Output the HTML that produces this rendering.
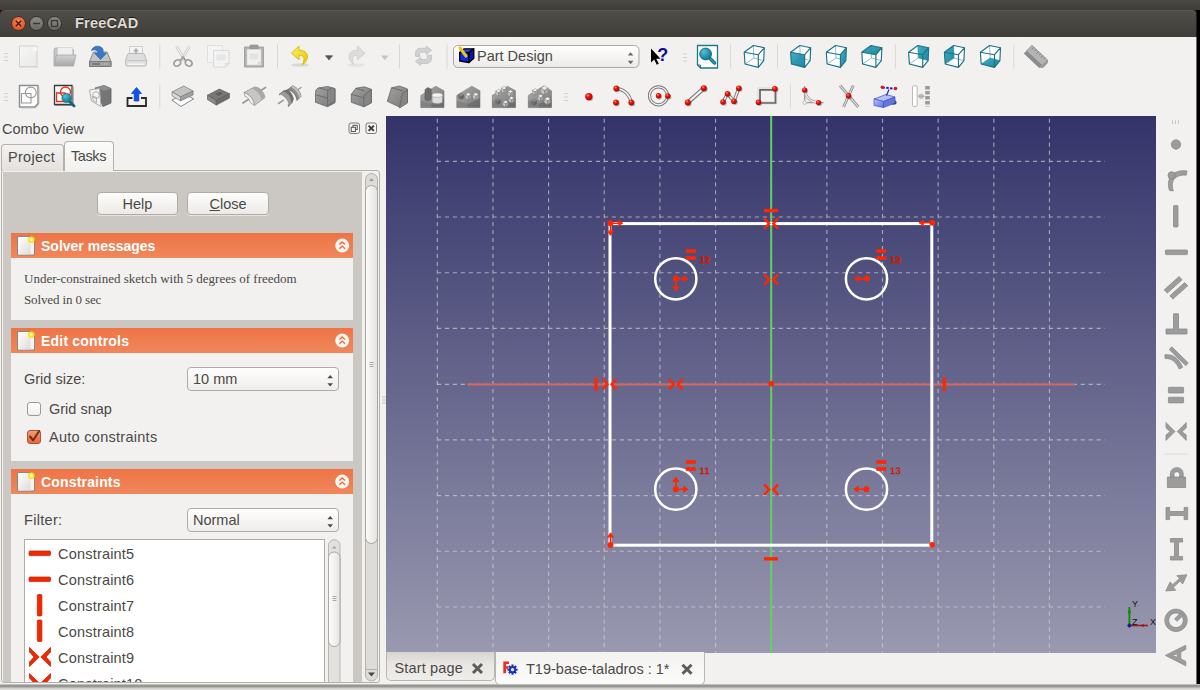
<!DOCTYPE html>
<html>
<head>
<meta charset="utf-8">
<title>FreeCAD</title>
<style>
html,body{margin:0;padding:0;}
body{width:1200px;height:690px;overflow:hidden;position:relative;background:#d9d7d3;font-family:"Liberation Sans",sans-serif;color:#4a4945;font-size:14px;}
.abs{position:absolute;}
#desk-right{left:1197px;top:9px;width:3px;height:676.500px;background:#000;}
#win{left:0;top:0;width:1197px;height:685px;background:#f2f1f0;overflow:hidden;}
#below{left:0;top:684px;width:1200px;height:6px;background:linear-gradient(#d8d6d3 0,#9a9894 22%,#8f8d89 36%,#b9b7b3 60%,#dddbd7 85%,#e6e4e1 100%);}
#topstrip{left:0;top:0;width:1200px;height:10px;background:linear-gradient(#4b4a45,#3d3c38);z-index:3;}
#titlebar{left:0;top:10px;width:1197px;height:27px;border-radius:5px 5px 0 0;background:linear-gradient(#4f4e48,#3e3d38);border-top:1px solid #5a5852;box-sizing:border-box;}
#title{left:75px;top:14px;font-weight:bold;font-size:14.5px;color:#dfdbd2;line-height:18px;letter-spacing:0.2px;text-shadow:0 -1px 0 #1c1b19;}
.wbtn{width:15px;height:15px;border-radius:50%;top:16px;box-sizing:border-box;}
/* 3D view */
#view{left:386px;top:116px;width:770px;height:537px;background:linear-gradient(#33336a,#9999b0);overflow:hidden;}
/* left panel */
.lbl{white-space:nowrap;line-height:18px;}
#tabframe{left:1px;top:170px;width:379px;height:512.500px;border:1px solid #b5b1ab;border-radius:3px;box-sizing:border-box;background:#f2f1f0;}
#scrollarea{left:3px;top:172px;width:359px;height:510px;background:#cbc8c4;overflow:hidden;}
.tab{box-sizing:border-box;border:1px solid #b5b1ab;border-bottom:none;border-radius:4px 4px 0 0;text-align:center;}
.btn{box-sizing:border-box;border:1px solid #b0aca5;border-radius:4px;background:linear-gradient(#fdfdfc,#eceae7);text-align:center;box-shadow:0 1px 0 rgba(255,255,255,.5);}
.hdr{left:8px;width:342px;height:25px;background:linear-gradient(#ee7445,#f0875c);color:#fff;font-weight:bold;}
.hdr .t{position:absolute;left:30px;top:4px;font-size:14px;line-height:18px;white-space:nowrap;}
.box{left:8px;width:342px;background:#f2f1f0;}
.combo{box-sizing:border-box;border:1px solid #b0aca5;border-radius:4px;background:linear-gradient(#fefefe,#efedeb);}
.chk{box-sizing:border-box;width:14px;height:14px;border:1px solid #9c9892;border-radius:3px;background:linear-gradient(#fff,#f0efed);}
</style>
</head>
<body>
<div id="win" class="abs">
  <div class="abs" style="left:0;top:9px;width:1197px;height:8px;background:#3a0806;"></div>
  <div id="titlebar" class="abs"></div>
  <div class="abs wbtn" style="left:11px;background:radial-gradient(circle at 50% 35%,#f08763,#df5a2c 70%);border:1px solid #5a2a18;"></div>
  <div class="abs wbtn" style="left:29px;background:linear-gradient(#8c8a82,#6a6861);border:1px solid #33322e;"></div>
  <div class="abs wbtn" style="left:47px;background:linear-gradient(#8c8a82,#6a6861);border:1px solid #33322e;"></div>
  <svg class="abs" style="left:10px;top:15px" width="54" height="17" viewBox="10 15 54 17"><path d="M15.800 20.800l5.400 5.400m0-5.400l-5.400 5.400" stroke="#4a1a0c" stroke-width="1.400" fill="none"/><path d="M33 23.500h7" stroke="#3a3934" stroke-width="1.400"/><rect x="51.500" y="20.500" width="6" height="6" fill="none" stroke="#3a3934" stroke-width="1.300"/></svg>
  <div id="title" class="abs">FreeCAD</div>

  <!-- TOOLBARS -->
  <div id="toolbars" class="abs" style="left:0;top:0;width:0;height:0;">
<svg class="abs" style="left:0;top:36px" width="1197" height="80" viewBox="0 36 1197 80">
<defs>
<radialGradient id="rb" cx="0.38" cy="0.32" r="0.7"><stop offset="0" stop-color="#ff9a8a"/><stop offset="0.35" stop-color="#f01808"/><stop offset="1" stop-color="#a80000"/></radialGradient>
<linearGradient id="gpaper" x1="0" y1="0" x2="1" y2="1"><stop offset="0" stop-color="#fbfbfb"/><stop offset="1" stop-color="#e4e3e2"/></linearGradient>
<linearGradient id="ggrey" x1="0" y1="0" x2="0" y2="1"><stop offset="0" stop-color="#c9c9c9"/><stop offset="1" stop-color="#8e8e8e"/></linearGradient>
<linearGradient id="gdark" x1="0" y1="0" x2="1" y2="1"><stop offset="0" stop-color="#9a9a9a"/><stop offset="1" stop-color="#6c6c6c"/></linearGradient>
<linearGradient id="gteal" x1="0" y1="0" x2="1" y2="1"><stop offset="0" stop-color="#35a7c4"/><stop offset="1" stop-color="#0b7f95"/></linearGradient>
<radialGradient id="gteal2" cx="0.35" cy="0.3" r="0.8"><stop offset="0" stop-color="#4fc0d8"/><stop offset="1" stop-color="#0a6f86"/></radialGradient>
<linearGradient id="gblue" x1="0" y1="0" x2="1" y2="1"><stop offset="0" stop-color="#b9c6f4"/><stop offset="1" stop-color="#5a72dc"/></linearGradient>
<linearGradient id="gyel" x1="0" y1="0" x2="1" y2="1"><stop offset="0" stop-color="#fff06a"/><stop offset="1" stop-color="#e4c400"/></linearGradient>
<linearGradient id="gpat" x1="0" y1="0" x2="1" y2="1"><stop offset="0" stop-color="#adadad"/><stop offset="1" stop-color="#767676"/></linearGradient>
<linearGradient id="gsolid" x1="0" y1="0" x2="1" y2="1"><stop offset="0" stop-color="#a2a2a2"/><stop offset="1" stop-color="#787878"/></linearGradient>
<linearGradient id="gcombo" x1="0" y1="0" x2="0" y2="1"><stop offset="0" stop-color="#ffffff"/><stop offset="1" stop-color="#eceae7"/></linearGradient>
</defs>
<path d="M4.0 53.5h4M4.0 57.0h4M4.0 60.5h4" stroke="#d5d2ce" stroke-width="1.2"/>
<g opacity="0.55"><path d="M19.5 46h17.5v20.5h-17.500z" fill="url(#gpaper)" stroke="#b8b8b8"/><circle cx="35" cy="49" r="2.200" fill="#fff"/><path d="M19 67h19" stroke="#bdbdbd"/></g>
<g opacity="0.75"><path d="M54 49.500l1-1.500h5l1 1.500h12.500v16h-19.500z" fill="#b4b4b4" stroke="#9a9a9a" stroke-width="0.800"/><path d="M57.500 47.500h15v9h-15z" fill="#f0f0f0" stroke="#c0c0c0" stroke-width="0.600"/><path d="M56.500 55h19.500l-2.500 11h-19.500z" fill="url(#ggrey)" stroke="#8f8f8f" stroke-width="0.800"/></g>
<g><path d="M93.500 52h13.500l4 9.500v5h-21.500v-5z" fill="#c4c4c4" stroke="#7d7d7d" stroke-width="0.9"/><path d="M89.500 61.500h21.500v5h-21.500z" fill="#9d9d9d" stroke="#777" stroke-width="0.9"/><path d="M92 64h8" stroke="#666" stroke-width="1.2"/><path d="M102 63v2M104.500 63v2M107 63v2" stroke="#bbb" stroke-width="1"/><path d="M91.500 50.500c1.500-5 9-6 11.500-1.200l0 4h3.300l-5.800 6.200l-5.800-6.200h3.500c0-3-3.500-4.500-6.700-2.800z" fill="#3a78c8" stroke="#2a5ea8" stroke-width="0.7"/></g>
<g><path d="M129.500 46.500h13v8.500h-13z" fill="#f4f4f4" stroke="#c4c4c4" stroke-width="0.800"/><path d="M136 48l3.200 3.200h-2v2.300h-2.400v-2.300h-2z" fill="#b0b0b0"/><path d="M127.500 55c0-1 1-1.500 2-1.500h13c1 0 2 .5 2 1.500l2 5.500v4c0 1-.7 1.500-1.500 1.500h-18c-.8 0-1.500-.5-1.500-1.500v-4z" fill="#dedede" stroke="#b4b4b4" stroke-width="0.900"/><path d="M126.500 60.500h19.500" stroke="#c4c4c4"/><path d="M128 64.200h16.500" stroke="#f6f6f6" stroke-width="1.400"/></g>
<path d="M159.8 44.5v24" stroke="#dad7d3" stroke-width="1"/>
<g opacity="0.85" fill="none"><path d="M176.500 46.500l8.500 14M189.500 46.500l-8.500 14" stroke="#c5c5c5" stroke-width="2.600"/><path d="M176.500 46.500l8.500 14M189.500 46.500l-8.500 14" stroke="#f3f3f3" stroke-width="1.100"/><ellipse cx="177.300" cy="63" rx="3.600" ry="2.900" stroke="#8f8f8f" stroke-width="1.700" transform="rotate(-30 177.300 63)"/><ellipse cx="188.700" cy="63" rx="3.600" ry="2.900" stroke="#8f8f8f" stroke-width="1.700" transform="rotate(30 188.700 63)"/><path d="M180.500 60.500l2.500-3.500l2.500 3.500" stroke="#8f8f8f" stroke-width="1.600"/></g>
<g opacity="0.5"><path d="M207.500 45.500h15v17h-15z" fill="#f8f8f8" stroke="#c9c9c9" stroke-width="0.9"/><path d="M213.500 50.500h15.500v13l-3.500 3.500h-12z" fill="#f6f6f6" stroke="#bdbdbd" stroke-width="0.9"/><path d="M216.500 54.500h9v6h-9z" fill="#dcdcdc"/><path d="M225.500 67v-3.500h3.500z" fill="#e2e2e2" stroke="#bdbdbd" stroke-width="0.7"/></g>
<g opacity="0.85"><path d="M244.500 47h19v20h-19z" fill="#a9a9a9" stroke="#8f8f8f" stroke-width="0.9"/><path d="M247 49.500h14v15.500h-14z" fill="#f1f1f1" stroke="#d0d0d0" stroke-width="0.6"/><path d="M250 45h8v3.500h-8z" fill="#8d8d8d" stroke="#7c7c7c" stroke-width="0.6"/><path d="M249.500 53.500h9v6h-9z" fill="#e0e0e0"/><path d="M258 65v-3h3z" fill="#c9c9c9"/></g>
<path d="M277.5 44.5v24" stroke="#dad7d3" stroke-width="1"/>
<ellipse cx="300" cy="65" rx="9" ry="1.800" fill="#000" opacity="0.10"/>
<path d="M299 46l-7.500 7.200l7.500 6.600v-4.200c4.500-.8 6.800 2 3.300 9.400c7.500-5.500 7.200-14.800-3.300-14.700z" fill="url(#gyel)" stroke="#d8b800" stroke-width="0.9" stroke-linejoin="round"/>
<path d="M325.300 55.800h7.400l-3.700 4.800z" fill="#5a5a5a"/><path d="M325.300 55.900h7.400" stroke="#444" stroke-width="0.800"/>
<ellipse cx="356" cy="65" rx="9" ry="1.800" fill="#000" opacity="0.05"/>
<path d="M357.500 46l7.500 7.200l-7.500 6.600v-4.200c-4.500-.8-6.800 2-3.300 9.400c-7.500-5.500-7.200-14.800 3.300-14.700z" fill="#dcdcdc" stroke="#cfcfcf" stroke-width="0.9" stroke-linejoin="round"/>
<path d="M381 55.500h7.500l-3.750 4.800z" fill="#c4c4c4"/>
<path d="M399.5 44.5v24" stroke="#dad7d3" stroke-width="1"/>
<g transform="translate(423.500 55.600) scale(0.860 0.820) translate(-423.500 -55.500)" fill="#d2d2d2" stroke="#bdbdbd" stroke-width="0.900" stroke-linejoin="round"><path d="M414.300 56.500v-4.500c0-3.500 2.500-5.500 6-5.500h6.500v-2.500l6 5l-6 5v-2.700h-5.500c-1.500 0-2.300.8-2.300 2.200v3z"/><path d="M432.700 55v4.500c0 3.500-2.500 5.500-6 5.500h-6.500v2.500l-6-5l6-5v2.700h5.500c1.500 0 2.300-.8 2.300-2.200v-3z"/></g>
<path d="M447.0 44.5v24" stroke="#dad7d3" stroke-width="1"/>
<rect x="453.500" y="45.500" width="185.500" height="22" rx="4.500" fill="url(#gcombo)" stroke="#aba7a1"/>
<path d="M627.800 55.600l2.800-3.400l2.800 3.400zM627.800 60.800l2.800 3.400l2.800-3.400z" fill="#6a6863"/>
<g stroke="#000" stroke-width="1.300" stroke-linejoin="round"><path d="M459.700 52.500l9.300 0l0 10l-9.300-1.500z" fill="#0a2ae8"/><path d="M459.700 52.500l4.500-3.700h9.600l-4.800 3.700z" fill="#2a4af0"/><path d="M469 52.500l4.800-3.700v9.500l-4.800 4.200z" fill="#0418b8"/></g>
<path d="M460 48l6 8" stroke="#f0c020" stroke-width="3.200" stroke-linecap="round"/>
<path d="M651 48.500v14l3.200-3l2.600 5.200l2-1l-2.500-5h4.200z" fill="#000"/>
<text x="657.300" y="61.300" font-family="Liberation Sans,sans-serif" font-weight="bold" font-size="18" fill="#10108a">?</text>
<path d="M683.0 54.0h4M683.0 57.5h4M683.0 61.0h4" stroke="#d5d2ce" stroke-width="1.2"/>
<path d="M697.500 45.500h20v22.500h-17l-3-3z" fill="#fff" stroke="#1d7890" stroke-width="1.300" stroke-linejoin="round"/>
<path d="M697.500 65h3v3" fill="none" stroke="#1d7890" stroke-width="1"/>
<path d="M709.500 58l5 5" stroke="#0c6a80" stroke-width="3.400" stroke-linecap="round"/><path d="M709.500 58l5 5" stroke="#2e9ab4" stroke-width="1.600" stroke-linecap="round"/>
<circle cx="705.600" cy="54" r="5.900" fill="url(#gteal2)" stroke="#0c6a80" stroke-width="0.900"/>
<path d="M730.6 44.5v24" stroke="#dad7d3" stroke-width="1"/>
<g stroke-linejoin="round">
<path d="M744.20 52.30L753.40 45.50L764.30 47.70L763.70 60.60L758.30 67.40L745.00 64.00z" fill="#fff" stroke="none"/>
<path d="M753.90 58.00L753.40 45.50M753.90 58.00L763.70 60.60M753.90 58.00L745.00 64.00" fill="none" stroke="#2a8296" stroke-opacity="0.650" stroke-width="0.800"/>
<path d="M744.20 52.30L758.30 54.70L758.30 67.40L745.00 64.00zM744.20 52.30L753.40 45.50L764.30 47.70L758.30 54.70zM758.30 54.70L764.30 47.70L763.70 60.60L758.30 67.40z" fill="none" stroke="#1d7186" stroke-width="1.150"/>
</g>
<path d="M777.5 44.5v24" stroke="#dad7d3" stroke-width="1"/>
<g stroke-linejoin="round">
<path d="M790.60 52.30L799.80 45.50L810.70 47.70L810.10 60.60L804.70 67.40L791.40 64.00z" fill="#fff" stroke="none"/>
<path d="M790.60 52.30L804.70 54.70L804.70 67.40L791.40 64.00z" fill="url(#gteal)" stroke="none" opacity="0.930"/>
<path d="M800.30 58.00L799.80 45.50M800.30 58.00L810.10 60.60M800.30 58.00L791.40 64.00" fill="none" stroke="#2a8296" stroke-opacity="0.650" stroke-width="0.800"/>
<path d="M790.60 52.30L804.70 54.70L804.70 67.40L791.40 64.00zM790.60 52.30L799.80 45.50L810.70 47.70L804.70 54.70zM804.70 54.70L810.70 47.70L810.10 60.60L804.70 67.40z" fill="none" stroke="#1d7186" stroke-width="1.150"/>
</g>
<g stroke-linejoin="round">
<path d="M826.30 52.30L835.50 45.50L846.40 47.70L845.80 60.60L840.40 67.40L827.10 64.00z" fill="#fff" stroke="none"/>
<path d="M840.40 54.70L846.40 47.70L845.80 60.60L840.40 67.40z" fill="url(#gteal)" stroke="none" opacity="0.930"/>
<path d="M836.00 58.00L835.50 45.50M836.00 58.00L845.80 60.60M836.00 58.00L827.10 64.00" fill="none" stroke="#2a8296" stroke-opacity="0.650" stroke-width="0.800"/>
<path d="M826.30 52.30L840.40 54.70L840.40 67.40L827.10 64.00zM826.30 52.30L835.50 45.50L846.40 47.70L840.40 54.70zM840.40 54.70L846.40 47.70L845.80 60.60L840.40 67.40z" fill="none" stroke="#1d7186" stroke-width="1.150"/>
</g>
<g stroke-linejoin="round">
<path d="M861.80 52.30L871.00 45.50L881.90 47.70L881.30 60.60L875.90 67.40L862.60 64.00z" fill="#fff" stroke="none"/>
<path d="M861.80 52.30L871.00 45.50L881.90 47.70L875.90 54.70z" fill="url(#gteal)" stroke="none" opacity="0.930"/>
<path d="M871.50 58.00L871.00 45.50M871.50 58.00L881.30 60.60M871.50 58.00L862.60 64.00" fill="none" stroke="#2a8296" stroke-opacity="0.650" stroke-width="0.800"/>
<path d="M861.80 52.30L875.90 54.70L875.90 67.40L862.60 64.00zM861.80 52.30L871.00 45.50L881.90 47.70L875.90 54.70zM875.90 54.70L881.90 47.70L881.30 60.60L875.90 67.40z" fill="none" stroke="#1d7186" stroke-width="1.150"/>
</g>
<path d="M895.4 44.5v24" stroke="#dad7d3" stroke-width="1"/>
<g stroke-linejoin="round">
<path d="M908.60 52.30L917.80 45.50L928.70 47.70L928.10 60.60L922.70 67.40L909.40 64.00z" fill="#fff" stroke="none"/>
<path d="M917.80 45.50L928.70 47.70L928.10 60.60L918.30 58.00z" fill="url(#gteal)" stroke="none" opacity="0.930"/>
<path d="M918.30 58.00L917.80 45.50M918.30 58.00L928.10 60.60M918.30 58.00L909.40 64.00" fill="none" stroke="#2a8296" stroke-opacity="0.650" stroke-width="0.800"/>
<path d="M908.60 52.30L922.70 54.70L922.70 67.40L909.40 64.00zM908.60 52.30L917.80 45.50L928.70 47.70L922.70 54.70zM922.70 54.70L928.70 47.70L928.10 60.60L922.70 67.40z" fill="none" stroke="#1d7186" stroke-width="1.150"/>
</g>
<g stroke-linejoin="round">
<path d="M944.40 52.30L953.60 45.50L964.50 47.70L963.90 60.60L958.50 67.40L945.20 64.00z" fill="#fff" stroke="none"/>
<path d="M944.40 52.30L953.60 45.50L954.10 58.00L945.20 64.00z" fill="url(#gteal)" stroke="none" opacity="0.930"/>
<path d="M954.10 58.00L953.60 45.50M954.10 58.00L963.90 60.60M954.10 58.00L945.20 64.00" fill="none" stroke="#2a8296" stroke-opacity="0.650" stroke-width="0.800"/>
<path d="M944.40 52.30L958.50 54.70L958.50 67.40L945.20 64.00zM944.40 52.30L953.60 45.50L964.50 47.70L958.50 54.70zM958.50 54.70L964.50 47.70L963.90 60.60L958.50 67.40z" fill="none" stroke="#1d7186" stroke-width="1.150"/>
</g>
<g stroke-linejoin="round">
<path d="M980.40 52.30L989.60 45.50L1000.50 47.70L999.90 60.60L994.50 67.40L981.20 64.00z" fill="#fff" stroke="none"/>
<path d="M981.20 64.00L994.50 67.40L999.90 60.60L990.10 58.00z" fill="url(#gteal)" stroke="none" opacity="0.930"/>
<path d="M990.10 58.00L989.60 45.50M990.10 58.00L999.90 60.60M990.10 58.00L981.20 64.00" fill="none" stroke="#2a8296" stroke-opacity="0.650" stroke-width="0.800"/>
<path d="M980.40 52.30L994.50 54.70L994.50 67.40L981.20 64.00zM980.40 52.30L989.60 45.50L1000.50 47.70L994.50 54.70zM994.50 54.70L1000.50 47.70L999.90 60.60L994.50 67.40z" fill="none" stroke="#1d7186" stroke-width="1.150"/>
</g>
<path d="M1013.8 44.5v24" stroke="#dad7d3" stroke-width="1"/>
<g transform="translate(1036.500 56.500) rotate(43)"><path d="M-11 -5h21.500v8h-21.500z" fill="#b4b4b4" stroke="#8e8e8e" stroke-width="0.800"/><path d="M-11 3h21.500l-1.500 3.200h-20z" fill="#8c8c8c" stroke="#7c7c7c" stroke-width="0.600"/><path d="M10.500 -5l1.800 2v6.500l-3.300 2.700" fill="#9c9c9c" stroke="#808080" stroke-width="0.600"/><path d="M-8 -5v3.200M-5 -5v2.200M-2 -5v3.200M1 -5v2.200M4 -5v3.200M7 -5v2.200" stroke="#7a7a7a" stroke-width="0.800"/></g>
<path d="M4.0 93.5h4M4.0 97.0h4M4.0 100.5h4" stroke="#d5d2ce" stroke-width="1.2"/>
<path d="M19.500 85.500h18.500v18l-3 3.500h-15.500z" fill="#fdfdfd" stroke="#8d8d8d" stroke-width="1.400" stroke-linejoin="round"/><path d="M38.800 87v17l-3.300 3.800h-15" fill="none" stroke="#b0b0b0" stroke-width="1"/>
<circle cx="30.800" cy="92.500" r="5.400" fill="none" stroke="#9a9a9a" stroke-width="1.100"/><path d="M21.500 93.500h9.500v9.500h-9.500z" fill="none" stroke="#9a9a9a" stroke-width="1.100"/>
<path d="M54.500 85.500h17.500v19h-17.500z" fill="#fdfdfd" stroke="#3a3a3a" stroke-width="1.300"/><path d="M55 105.500h18v-19" fill="none" stroke="#8a8a8a" stroke-width="1.200"/>
<circle cx="65.500" cy="92" r="5" fill="none" stroke="#e8301a" stroke-width="1.300"/><path d="M56.500 93h8.500v8.500h-8.500z" fill="none" stroke="#e8301a" stroke-width="1.300"/>
<path d="M69.500 101.500l4.600 4.600" stroke="#0c6a80" stroke-width="2.800" stroke-linecap="round"/><circle cx="66.500" cy="98" r="4.600" fill="url(#gteal2)" stroke="#0c6a80" stroke-width="0.700"/>
<path d="M95 88l9-2.500l7 3v14.500l-8 3.500z" fill="#767676" stroke="#5e5e5e" stroke-width="0.800" stroke-linejoin="round"/><path d="M104 85.500l7 3l-6.500 2.200l-9.500-2.700z" fill="#8d8d8d"/>
<path d="M89.500 90l10 -1.500l1.500 18l-9.500-5.500z" fill="#f4f4f4" stroke="#a5a5a5" stroke-width="0.900" stroke-linejoin="round"/><circle cx="96" cy="95" r="3.300" fill="none" stroke="#a8a8a8" stroke-width="0.900"/><path d="M92.500 96.500l3.800.8l.4 5l-3.600-1.800z" fill="none" stroke="#a8a8a8" stroke-width="0.900"/>
<path d="M132.500 98h-5v8h18.500v-8h-5" fill="none" stroke="#2a2a2a" stroke-width="1.800"/>
<path d="M136.500 87.500l5 6h-2.700v7.500h-4.600v-7.500h-2.700z" fill="#0a54f0" stroke="#0838b0" stroke-width="0.700" stroke-linejoin="round"/>
<path d="M159.8 84.3v24" stroke="#dad7d3" stroke-width="1"/>
<path d="M171.900 100l9.100 6.500l12.700-7.700l-9.500-4.800z" fill="#fdfdfd" stroke="#6a6a6a" stroke-width="0.800" stroke-linejoin="round"/>
<g stroke="#7a7a7a" stroke-width="0.700" stroke-linejoin="round"><path d="M172.100 91.900l11.600-5.900l9.400 5l-12.500 5.900z" fill="#c4c4c4"/><path d="M172.100 91.900l8.500 5v4l-8.500-5.100z" fill="#dadada"/><path d="M180.600 96.900l12.500-5.900v3.900l-12.500 6z" fill="#a2a2a2"/></g>
<g stroke="#5a5a5a" stroke-width="0.700" stroke-linejoin="round"><path d="M207.500 95.200l11.900-6.200l10 4.700l-13.100 6.900z" fill="#787878"/><path d="M207.500 95.200l8.800 5.400v4.500l-8.800-5.500z" fill="#8a8a8a"/><path d="M216.300 100.600l13.100-6.900v4.400l-13.100 7z" fill="#6c6c6c"/><path d="M215.500 94l3.800-1.900l3.200 1.500l-3.900 2.100z" fill="#606060" stroke="#555" stroke-width="0.400"/></g>
<path d="M243 103l6-4M260 91l5.500-3.500" stroke="#9a9a9a" stroke-width="1.700" stroke-linecap="round"/>
<path d="M244 92.500l10.500-5.500c5 0 9.500 5 10.500 10.500l-10.500 8c-1-6-4.500-11-10.500-13z" fill="#c6c6c6" stroke="#8c8c8c" stroke-width="0.700" stroke-linejoin="round"/><path d="M244 92.500c6 2 9.500 7 10.500 13l-4.500-3.200c-.5-3-2-5-5-6z" fill="#f2f2f2" stroke="#8c8c8c" stroke-width="0.700" stroke-linejoin="round"/><path d="M254.500 87c5 0 9.500 5 10.500 10.500l-3.500 2.600c-1-5.500-4.500-9.500-9.500-11.500z" fill="#a8a8a8"/>
<path d="M278.500 103.500l5-3.300M296.500 90.500l4.500-3" stroke="#9a9a9a" stroke-width="1.500" stroke-linecap="round"/>
<path d="M279 94.500l4.500-3.500c4.500 1 8 5.500 8.500 11.500l-3.500 4c-1-6-4-10-9.500-12z" fill="#9a9a9a" stroke="#5f5f5f" stroke-width="0.700" stroke-linejoin="round"/><path d="M283.500 91l4.500-1.500c3 3 4.500 5.500 5.500 9.500l-1.500 3.500c-.5-6-4-10.500-8.500-11.500z" fill="#6e6e6e" stroke="#5a5a5a" stroke-width="0.500"/><path d="M288 89.500l4.500-3.700c4.500 1.500 7.500 5.500 8.500 10.500l-4 4.200c-.5-5-4-9.500-9-11z" fill="#8a8a8a" stroke="#5f5f5f" stroke-width="0.700" stroke-linejoin="round"/><path d="M292.500 85.800c4.500 1.500 7.500 5.500 8.500 10.500l-1.800 1.800c-1-5-4-9-8.300-10.800z" fill="#bdbdbd"/><path d="M280.200 95.300c4.200 2 6.800 5.400 7.800 9.200" fill="none" stroke="#f2f2f2" stroke-width="1.500"/>
<g stroke="#666" stroke-width="0.800" stroke-linejoin="round"><path d="M315.5 92.8c0-3 1.500-4.500 3.500-5l9-1.300l7 2.300v14l-7.500 4l-12-4.500z" fill="url(#gsolid)"/><path d="M335.0 88.8l0 12.500l-7.500 4v-13.500c0-2 4.500-5.500 7.500-3z" fill="#858585"/><path d="M315.5 94.8l12 3.200M319.0 88.0l9 2.200" fill="none" stroke="#5a5a5a" stroke-width="0.700"/></g>
<g stroke="#666" stroke-width="0.800" stroke-linejoin="round"><path d="M351.3 94.3l4.500-6l8.500-1.500l7 2.500v13.500l-7.500 4l-12.500-4.500z" fill="url(#gsolid)"/><path d="M371.3 89.3v13.500l-7.500 4v-11.500z" fill="#858585"/><path d="M351.3 94.3l12.500 3.500M355.8 88.3l8.500 2.500" fill="none" stroke="#5a5a5a" stroke-width="0.700"/></g>
<g stroke="#666" stroke-width="0.800" stroke-linejoin="round"><path d="M387.3 101.3l4.200-13.500l8-1.800l8 3v13l-8 5z" fill="url(#gsolid)"/><path d="M407.5 90.0v13l-8 5l3-15z" fill="#858585"/><path d="M391.5 87.8l11 3" fill="none" stroke="#5a5a5a" stroke-width="0.700"/></g>
<g stroke-linejoin="round"><path d="M420.8 95.4l15-9.200l8.200 4.600v16.800h-23.200z" fill="url(#gpat)" stroke="#7a7a7a" stroke-width="0.600"/><path d="M420.8 100.4l10.500 3.500v3.700h-10.500z" fill="#7e7e7e" opacity="0.800"/><path d="M431.3 103.9l12.700-5.500v9.200h-12.700z" fill="#686868" opacity="0.700"/>
<path d="M425.0 89.8l2.800-2.200l3.400 1.600v9.600l-3.400 2.200l-2.800-1.400z" fill="#6a6a6a" stroke="#585858" stroke-width="0.600"/>
<path d="M432.1 95.2c0-2.800 10.400-2.800 10.400 0v6.400c0 2.800-10.400 2.800-10.400 0z" fill="#dcdcdc" stroke="#8a8a8a" stroke-width="0.600"/><ellipse cx="437.3" cy="95.2" rx="5.200" ry="2.100" fill="#f4f4f4" stroke="#999" stroke-width="0.500"/>
</g>
<g stroke-linejoin="round"><path d="M456.8 95.4l15-9.200l8.200 4.600v16.800h-23.200z" fill="url(#gpat)" stroke="#7a7a7a" stroke-width="0.600"/><path d="M456.8 100.4l10.500 3.500v3.700h-10.500z" fill="#7e7e7e" opacity="0.800"/><path d="M467.3 103.9l12.700-5.500v9.200h-12.700z" fill="#686868" opacity="0.700"/>
<path d="M458.2 94.6l2.8 -1.7l2.8 1.7l-2.8 1.7z" fill="#8a8a8a" stroke="#777" stroke-width="0.400"/>
<path d="M458.2 94.6l2.8 1.7v3.4l-2.8 -1.7z" fill="#6e6e6e" stroke="#777" stroke-width="0.400"/>
<path d="M461.0 96.3l2.8 -1.7v3.4l-2.8 1.7z" fill="#5e5e5e" stroke="#777" stroke-width="0.400"/>
<path d="M465.3 94.5l3.0 -1.8l3.0 1.8l-3.0 1.8z" fill="#f4f4f4" stroke="#777" stroke-width="0.400"/>
<path d="M465.3 94.5l3.0 1.8v3.6l-3.0 -1.8z" fill="#c8c8c8" stroke="#777" stroke-width="0.400"/>
<path d="M468.3 96.3l3.0 -1.8v3.6l-3.0 1.8z" fill="#a4a4a4" stroke="#777" stroke-width="0.400"/>
<path d="M472.8 94.5l3.0 -1.8l3.0 1.8l-3.0 1.8z" fill="#f4f4f4" stroke="#777" stroke-width="0.400"/>
<path d="M472.8 94.5l3.0 1.8v3.6l-3.0 -1.8z" fill="#c8c8c8" stroke="#777" stroke-width="0.400"/>
<path d="M475.8 96.3l3.0 -1.8v3.6l-3.0 1.8z" fill="#a4a4a4" stroke="#777" stroke-width="0.400"/>
</g>
<g stroke-linejoin="round"><path d="M492.3 95.4l15-9.200l8.200 4.600v16.800h-23.200z" fill="url(#gpat)" stroke="#7a7a7a" stroke-width="0.600"/><path d="M492.3 100.4l10.500 3.500v3.700h-10.500z" fill="#7e7e7e" opacity="0.800"/><path d="M502.8 103.9l12.700-5.500v9.200h-12.700z" fill="#686868" opacity="0.700"/>
<path d="M495.3 99.7l2.7 -1.6l2.7 1.6l-2.7 1.6z" fill="#8a8a8a" stroke="#777" stroke-width="0.400"/>
<path d="M495.3 99.7l2.7 1.6v3.2l-2.7 -1.6z" fill="#6e6e6e" stroke="#777" stroke-width="0.400"/>
<path d="M498.0 101.3l2.7 -1.6v3.2l-2.7 1.6z" fill="#5e5e5e" stroke="#777" stroke-width="0.400"/>
<path d="M495.7 91.1l2.8 -1.7l2.8 1.7l-2.8 1.7z" fill="#f4f4f4" stroke="#777" stroke-width="0.400"/>
<path d="M495.7 91.1l2.8 1.7v3.4l-2.8 -1.7z" fill="#c8c8c8" stroke="#777" stroke-width="0.400"/>
<path d="M498.5 92.8l2.8 -1.7v3.4l-2.8 1.7z" fill="#a4a4a4" stroke="#777" stroke-width="0.400"/>
<path d="M501.2 88.1l2.8 -1.7l2.8 1.7l-2.8 1.7z" fill="#f4f4f4" stroke="#777" stroke-width="0.400"/>
<path d="M501.2 88.1l2.8 1.7v3.4l-2.8 -1.7z" fill="#c8c8c8" stroke="#777" stroke-width="0.400"/>
<path d="M504.0 89.8l2.8 -1.7v3.4l-2.8 1.7z" fill="#a4a4a4" stroke="#777" stroke-width="0.400"/>
<path d="M507.7 91.6l2.8 -1.7l2.8 1.7l-2.8 1.7z" fill="#f4f4f4" stroke="#777" stroke-width="0.400"/>
<path d="M507.7 91.6l2.8 1.7v3.4l-2.8 -1.7z" fill="#c8c8c8" stroke="#777" stroke-width="0.400"/>
<path d="M510.5 93.3l2.8 -1.7v3.4l-2.8 1.7z" fill="#a4a4a4" stroke="#777" stroke-width="0.400"/>
<path d="M508.7 98.1l2.8 -1.7l2.8 1.7l-2.8 1.7z" fill="#f4f4f4" stroke="#777" stroke-width="0.400"/>
<path d="M508.7 98.1l2.8 1.7v3.4l-2.8 -1.7z" fill="#c8c8c8" stroke="#777" stroke-width="0.400"/>
<path d="M511.5 99.8l2.8 -1.7v3.4l-2.8 1.7z" fill="#a4a4a4" stroke="#777" stroke-width="0.400"/>
<path d="M502.7 102.1l2.8 -1.7l2.8 1.7l-2.8 1.7z" fill="#f4f4f4" stroke="#777" stroke-width="0.400"/>
<path d="M502.7 102.1l2.8 1.7v3.4l-2.8 -1.7z" fill="#c8c8c8" stroke="#777" stroke-width="0.400"/>
<path d="M505.5 103.8l2.8 -1.7v3.4l-2.8 1.7z" fill="#a4a4a4" stroke="#777" stroke-width="0.400"/>
</g>
<g stroke-linejoin="round"><path d="M528.3 95.4l15-9.200l8.200 4.600v16.800h-23.200z" fill="url(#gpat)" stroke="#7a7a7a" stroke-width="0.600"/><path d="M528.3 100.4l10.500 3.500v3.700h-10.500z" fill="#7e7e7e" opacity="0.800"/><path d="M538.8 103.9l12.700-5.500v9.200h-12.700z" fill="#686868" opacity="0.700"/>
<path d="M531.2 100.6l2.8 -1.7l2.8 1.7l-2.8 1.7z" fill="#8a8a8a" stroke="#777" stroke-width="0.400"/>
<path d="M531.2 100.6l2.8 1.7v3.4l-2.8 -1.7z" fill="#6e6e6e" stroke="#777" stroke-width="0.400"/>
<path d="M534.0 102.3l2.8 -1.7v3.4l-2.8 1.7z" fill="#5e5e5e" stroke="#777" stroke-width="0.400"/>
<path d="M532.3 90.2l2.7 -1.6l2.7 1.6l-2.7 1.6z" fill="#f4f4f4" stroke="#777" stroke-width="0.400"/>
<path d="M532.3 90.2l2.7 1.6v3.2l-2.7 -1.6z" fill="#c8c8c8" stroke="#777" stroke-width="0.400"/>
<path d="M535.0 91.8l2.7 -1.6v3.2l-2.7 1.6z" fill="#a4a4a4" stroke="#777" stroke-width="0.400"/>
<path d="M540.7 88.1l3.8 -2.3l3.8 2.3l-3.8 2.3z" fill="#e8e8e8" stroke="#777" stroke-width="0.400"/>
<path d="M540.7 88.1l3.8 2.3v4.6l-3.8 -2.3z" fill="#c4c4c4" stroke="#777" stroke-width="0.400"/>
<path d="M544.5 90.4l3.8 -2.3v4.6l-3.8 2.3z" fill="#a8a8a8" stroke="#777" stroke-width="0.400"/>
<path d="M537.7 96.1l2.8 -1.7l2.8 1.7l-2.8 1.7z" fill="#f4f4f4" stroke="#777" stroke-width="0.400"/>
<path d="M537.7 96.1l2.8 1.7v3.4l-2.8 -1.7z" fill="#c8c8c8" stroke="#777" stroke-width="0.400"/>
<path d="M540.5 97.8l2.8 -1.7v3.4l-2.8 1.7z" fill="#a4a4a4" stroke="#777" stroke-width="0.400"/>
<path d="M544.3 98.9l3.2 -1.9l3.2 1.9l-3.2 1.9z" fill="#f4f4f4" stroke="#777" stroke-width="0.400"/>
<path d="M544.3 98.9l3.2 1.9v3.8l-3.2 -1.9z" fill="#c8c8c8" stroke="#777" stroke-width="0.400"/>
<path d="M547.5 100.8l3.2 -1.9v3.8l-3.2 1.9z" fill="#a4a4a4" stroke="#777" stroke-width="0.400"/>
</g>
<path d="M564.0 93.5h4M564.0 97.0h4M564.0 100.5h4" stroke="#d5d2ce" stroke-width="1.2"/>
<circle cx="589.70" cy="97.50" r="3.60" fill="#777" opacity="0.55"/>
<circle cx="588.80" cy="96.60" r="3.60" fill="url(#rb)"/>
<path d="M616.300 88.500c8 .5 13.500 6.500 15 14" fill="none" stroke="#787878" stroke-width="3.400"/><path d="M616.300 88.500c8 .5 13.500 6.500 15 14" fill="none" stroke="#f6f6f6" stroke-width="1.400"/>
<circle cx="617.20" cy="89.40" r="2.90" fill="#777" opacity="0.55"/>
<circle cx="616.30" cy="88.50" r="2.90" fill="url(#rb)"/>
<circle cx="616.90" cy="103.40" r="2.90" fill="#777" opacity="0.55"/>
<circle cx="616.00" cy="102.50" r="2.90" fill="url(#rb)"/>
<circle cx="632.20" cy="103.40" r="2.90" fill="#777" opacity="0.55"/>
<circle cx="631.30" cy="102.50" r="2.90" fill="url(#rb)"/>
<circle cx="658.500" cy="95.800" r="9" fill="none" stroke="#787878" stroke-width="3.200"/><circle cx="658.500" cy="95.800" r="9" fill="none" stroke="#f6f6f6" stroke-width="1.300"/>
<circle cx="659.40" cy="96.70" r="2.70" fill="#777" opacity="0.55"/>
<circle cx="658.50" cy="95.80" r="2.70" fill="url(#rb)"/>
<circle cx="668.70" cy="96.90" r="2.70" fill="#777" opacity="0.55"/>
<circle cx="667.80" cy="96.00" r="2.70" fill="url(#rb)"/>
<path d="M687.800 102.500l16-14.200" stroke="#7c7c7c" stroke-width="4.400"/><path d="M687.800 102.500l16-14.200" stroke="#f2f2f2" stroke-width="2.200"/>
<circle cx="688.70" cy="103.40" r="3.00" fill="#777" opacity="0.55"/>
<circle cx="687.80" cy="102.50" r="3.00" fill="url(#rb)"/>
<circle cx="704.70" cy="89.20" r="3.00" fill="#777" opacity="0.55"/>
<circle cx="703.80" cy="88.30" r="3.00" fill="url(#rb)"/>
<path d="M723 102l4.500-8.200l6.500 7.500l4.700-13" fill="none" stroke="#7c7c7c" stroke-width="3.400" stroke-linejoin="round"/><path d="M723 102l4.500-8.200l6.500 7.500l4.700-13" fill="none" stroke="#f6f6f6" stroke-width="1.400" stroke-linejoin="round"/>
<circle cx="723.90" cy="102.90" r="2.80" fill="#777" opacity="0.55"/>
<circle cx="723.00" cy="102.00" r="2.80" fill="url(#rb)"/>
<circle cx="728.40" cy="94.70" r="2.80" fill="#777" opacity="0.55"/>
<circle cx="727.50" cy="93.80" r="2.80" fill="url(#rb)"/>
<circle cx="734.90" cy="102.20" r="2.80" fill="#777" opacity="0.55"/>
<circle cx="734.00" cy="101.30" r="2.80" fill="url(#rb)"/>
<circle cx="739.70" cy="89.20" r="2.80" fill="#777" opacity="0.55"/>
<circle cx="738.80" cy="88.30" r="2.80" fill="url(#rb)"/>
<path d="M759 88.800h16.500v14h-16.500z" fill="none" stroke="#e2e2e2" stroke-width="3.600"/><path d="M760 89.800h15.500v13.200h-15.500z" fill="none" stroke="#666" stroke-width="1.700"/>
<circle cx="775.70" cy="89.70" r="2.80" fill="#777" opacity="0.55"/>
<circle cx="774.80" cy="88.80" r="2.80" fill="url(#rb)"/>
<circle cx="759.40" cy="103.20" r="2.80" fill="#777" opacity="0.55"/>
<circle cx="758.50" cy="102.30" r="2.80" fill="url(#rb)"/>
<path d="M790.4 84.3v24" stroke="#dad7d3" stroke-width="1"/>
<path d="M804.600 86v16.600h19" fill="none" stroke="#9c9c9c" stroke-width="1.300"/><path d="M804.600 90c1 7.500 6 12 14 12.600" fill="none" stroke="#aaa" stroke-width="2.600"/><path d="M804.600 90c1 7.500 6 12 14 12.600" fill="none" stroke="#f6f6f6" stroke-width="1.100"/><path d="M802.500 102.600l2.100-2.400l2.100 2.400l-2.100 2.400z" fill="#eee" stroke="#aaa" stroke-width="0.700"/>
<circle cx="805.50" cy="90.90" r="2.60" fill="#777" opacity="0.55"/>
<circle cx="804.60" cy="90.00" r="2.60" fill="url(#rb)"/>
<circle cx="819.40" cy="103.50" r="2.60" fill="#777" opacity="0.55"/>
<circle cx="818.50" cy="102.60" r="2.60" fill="url(#rb)"/>
<path d="M840 85.500l18.300 21.500M853.300 85.500l-9.800 21.500" stroke="#8c8c8c" stroke-width="2.800"/><path d="M840 85.500l18.300 21.500M853.300 85.500l-9.800 21.500" stroke="#d9d9d9" stroke-width="1.200"/>
<circle cx="849.40" cy="96.70" r="2.70" fill="#777" opacity="0.55"/>
<circle cx="848.50" cy="95.80" r="2.70" fill="url(#rb)"/>
<ellipse cx="893.500" cy="102.500" rx="3" ry="2.200" fill="#444"/>
<g stroke="#3a4ed8" stroke-width="0.700" stroke-linejoin="round"><path d="M874 99l12-4.500l9 2.500l-11.500 4.500z" fill="#b4c0f2"/><path d="M874 99l9.500 2.500v6l-9.500-2z" fill="url(#gblue)"/><path d="M883.500 101.500l11.500-4.500v6l-11.500 4.500z" fill="#6276dc"/></g>
<path d="M886.500 95.500l2.500-6" stroke="#2020c0" stroke-width="1.200"/><path d="M882.500 87.500l13 1.200" stroke="#1a1ac8" stroke-width="2" stroke-dasharray="2.400 1.400"/>
<circle cx="882.300" cy="87.300" r="1.700" fill="#e01808"/><circle cx="895.600" cy="88.500" r="1.700" fill="#e01808"/>
<rect x="912.500" y="85.800" width="4.600" height="20.600" rx="0.800" fill="#fff" stroke="#a9a9a9" stroke-width="0.800"/>
<path d="M927.500 86v20.500" stroke="#9a9a9a" stroke-width="4.600" stroke-dasharray="3.600 1.400"/>
<path d="M918.500 96.300h6" stroke="#a8a8a8" stroke-width="0.800"/><path d="M918 96.300l2.600-2.400v4.800zM924.300 96.300l-2.600-2.400v4.800z" fill="#b4b4b4" stroke="#999" stroke-width="0.400"/>
</svg>
<div class="abs lbl" style="left:477px;top:47px;font-size:14.5px;">Part Design</div>
</div>

  <!-- LEFT PANEL -->
  <div id="left" class="abs" style="left:0;top:0;width:384px;height:685px;">
<div class="abs lbl" style="left:2px;top:120px;font-size:14.5px;">Combo View</div>
<!-- dock buttons -->
<svg class="abs" style="left:348px;top:122px" width="32" height="13" viewBox="0 0 32 13">
 <rect x="1" y="1" width="10.5" height="10.5" rx="2" fill="#f7f6f5" stroke="#7b7973" stroke-width="1"/>
 <rect x="5" y="3.3" width="4.2" height="4.2" fill="none" stroke="#55534e" stroke-width="1"/>
 <rect x="3.2" y="5.3" width="4.2" height="4.2" fill="#f7f6f5" stroke="#55534e" stroke-width="1"/>
 <rect x="18" y="1" width="10.5" height="10.5" rx="2" fill="#f7f6f5" stroke="#7b7973" stroke-width="1"/>
 <path d="M20.6 3.6l5.3 5.3m0-5.3l-5.3 5.3" stroke="#3c3b37" stroke-width="2" fill="none"/>
</svg>
<!-- tabs -->
<div id="tabframe" class="abs"></div>
<div class="abs tab" style="left:1px;top:144px;width:63px;height:27px;background:linear-gradient(#f4f3f2,#e3e0dd);"></div>
<div class="abs tab" style="left:64px;top:141px;width:50px;height:30px;background:linear-gradient(#fbfbfa,#f2f1f0);"></div>
<div class="abs lbl" style="left:8px;top:148px;font-size:14.5px;letter-spacing:0.28px;">Project</div>
<div class="abs lbl" style="left:71px;top:147px;font-size:14.5px;letter-spacing:-0.4px;">Tasks</div>
<div id="scrollarea" class="abs"><div class="abs" style="left:0;top:1px;width:360px;height:512px;">
 <div class="abs btn" style="left:94px;top:19px;width:81px;height:23px;"></div>
 <div class="abs btn" style="left:184px;top:19px;width:82px;height:23px;"></div>
 <div class="abs lbl" style="left:94px;top:21.500px;width:81px;text-align:center;font-size:14.5px;">Help</div>
 <div class="abs lbl" style="left:184px;top:21.500px;width:82px;text-align:center;font-size:14.5px;"><u>C</u>lose</div>

 <!-- Solver messages -->
 <div class="abs hdr" style="top:60px;"><span class="t">Solver messages</span></div>
 <div class="abs box" style="top:85px;height:62px;"></div>
 <div class="abs lbl" style="left:21px;top:97px;font-family:'Liberation Serif',serif;font-size:13px;">Under-constrained sketch with 5 degrees of freedom</div>
 <div class="abs lbl" style="left:21px;top:118px;font-family:'Liberation Serif',serif;font-size:13px;letter-spacing:-0.12px;">Solved in 0 sec</div>

 <!-- Edit controls -->
 <div class="abs hdr" style="top:155px;"><span class="t" style="letter-spacing:0.2px">Edit controls</span></div>
 <div class="abs box" style="top:180px;height:108px;"></div>
 <div class="abs lbl" style="left:21px;top:197px;font-size:14.5px;">Grid size:</div>
 <div class="abs combo" style="left:184px;top:194px;width:152px;height:24px;"></div>
 <div class="abs lbl" style="left:190px;top:197px;font-size:14.5px;">10 mm</div>
 <div class="abs chk" style="left:24px;top:229px;"></div>
 <div class="abs lbl" style="left:46px;top:227px;font-size:14.5px;">Grid snap</div>
 <div class="abs chk" style="left:24px;top:257px;background:linear-gradient(#f59a73,#e9683a);border-color:#b2522e;"></div>
 <div class="abs lbl" style="left:46px;top:255px;font-size:14.5px;letter-spacing:0.28px;">Auto constraints</div>

 <!-- Constraints -->
 <div class="abs hdr" style="top:296px;"><span class="t" style="letter-spacing:0.17px">Constraints</span></div>
 <div class="abs box" style="top:321px;height:200px;"></div>
 <div class="abs lbl" style="left:21px;top:338px;font-size:14.5px;letter-spacing:0.3px;">Filter:</div>
 <div class="abs combo" style="left:184px;top:335px;width:152px;height:24px;"></div>
 <div class="abs lbl" style="left:190px;top:338px;font-size:14.5px;">Normal</div>
 <div class="abs" style="left:21px;top:366px;width:301px;height:160px;background:#fff;border:1px solid #aeaaa4;box-sizing:border-box;"></div>
 <div class="abs lbl" style="left:55px;top:372px;font-size:14.5px;letter-spacing:0.2px;">Constraint5</div>
 <div class="abs lbl" style="left:55px;top:398px;font-size:14.5px;letter-spacing:0.2px;">Constraint6</div>
 <div class="abs lbl" style="left:55px;top:424px;font-size:14.5px;letter-spacing:0.2px;">Constraint7</div>
 <div class="abs lbl" style="left:55px;top:450px;font-size:14.5px;letter-spacing:0.2px;">Constraint8</div>
 <div class="abs lbl" style="left:55px;top:476px;font-size:14.5px;letter-spacing:0.2px;">Constraint9</div>
 <div class="abs lbl" style="left:55px;top:502px;font-size:14.5px;letter-spacing:0.2px;">Constraint10</div>
 <svg class="abs" style="left:0;top:0" width="360" height="512" viewBox="3 173 360 512">

  <defs><linearGradient id="docg" x1="0" y1="0" x2="1" y2="1"><stop offset="0" stop-color="#fff"/><stop offset="1" stop-color="#dddbd8"/></linearGradient>
  <linearGradient id="sbh" x1="0" y1="0" x2="1" y2="0"><stop offset="0" stop-color="#fdfdfc"/><stop offset="1" stop-color="#e6e4e1"/></linearGradient></defs>
  
   <g>
    <path d="M17.5 236.5h13.500l3.500 3.500v15h-17z" fill="#f4f3f1" stroke="#8a8782" stroke-width="1"/>
    <path d="M18.5 237.5h12v17h-12z" fill="url(#docg)" stroke="none"/>
    <circle cx="31.3" cy="239.8" r="3.300" fill="#f6e21a"/>
    <circle cx="31.3" cy="239.8" r="1.700" fill="#fdf9a0"/>
    <circle cx="342.2" cy="245.6" r="7" fill="#fbf6f2"/>
    <path d="M339.400 244.5l2.800-2.600l2.800 2.600M339.400 248.70000000000002l2.800-2.600l2.800 2.600" fill="none" stroke="#e8663a" stroke-width="1.300"/>
   </g>
   <g>
    <path d="M17.5 331.5h13.500l3.500 3.500v15h-17z" fill="#f4f3f1" stroke="#8a8782" stroke-width="1"/>
    <path d="M18.5 332.5h12v17h-12z" fill="url(#docg)" stroke="none"/>
    <circle cx="31.3" cy="334.8" r="3.300" fill="#f6e21a"/>
    <circle cx="31.3" cy="334.8" r="1.700" fill="#fdf9a0"/>
    <circle cx="342.2" cy="340.6" r="7" fill="#fbf6f2"/>
    <path d="M339.400 339.5l2.800-2.600l2.800 2.600M339.400 343.7l2.800-2.600l2.800 2.600" fill="none" stroke="#e8663a" stroke-width="1.300"/>
   </g>
   <g>
    <path d="M17.5 472.5h13.500l3.500 3.500v15h-17z" fill="#f4f3f1" stroke="#8a8782" stroke-width="1"/>
    <path d="M18.5 473.5h12v17h-12z" fill="url(#docg)" stroke="none"/>
    <circle cx="31.3" cy="475.8" r="3.300" fill="#f6e21a"/>
    <circle cx="31.3" cy="475.8" r="1.700" fill="#fdf9a0"/>
    <circle cx="342.2" cy="481.6" r="7" fill="#fbf6f2"/>
    <path d="M339.400 480.5l2.800-2.600l2.800 2.600M339.400 484.7l2.800-2.600l2.800 2.600" fill="none" stroke="#e8663a" stroke-width="1.300"/>
   </g>
  <!-- combo arrows -->
  <g fill="#4a4945">
   <path d="M327.400 378.300l2.800-3.300l2.800 3.300zM327.400 383.300l2.800 3.300l2.800-3.300z"/>
   <path d="M327.400 519.300l2.800-3.300l2.800 3.300zM327.400 524.300l2.800 3.300l2.800-3.300z"/>
  </g>
  <!-- check mark -->
  <path d="M30 436.500l3.200 3.800l6-9.300" fill="none" stroke="#6a2e18" stroke-width="2" stroke-linecap="round" stroke-linejoin="round"/>
  <!-- list scrollbar -->
  <rect x="328.500" y="539.800" width="11.500" height="150" rx="5.500" fill="#e3e1de" stroke="#b9b5af"/>
  <path d="M332 548.500l2.300-2.600l2.300 2.600z" fill="#a09d98"/>
  <rect x="328.500" y="552" width="11.500" height="94.500" rx="5.500" fill="url(#sbh)" stroke="#aaa6a0"/>
  <path d="M332.500 596.500h4M332.500 598.500h4M332.500 600.500h4" stroke="#9a9791" stroke-width="0.800"/>
  <g fill="#f42800" stroke="#b81c00" stroke-width="0.700">
   <rect x="29" y="551" width="21.5" height="4.6" rx="1"/>
   <rect x="29" y="577" width="21.5" height="4.6" rx="1"/>
   <rect x="37.3" y="594.5" width="4.6" height="21.5" rx="1"/>
   <rect x="37.3" y="620" width="4.6" height="21.5" rx="1"/>
   <path d="M29.500 647.5l9.700 9.500l-9.700 9.500v-4.600l4.500-4.900l-4.500-4.900zM50.500 647.5l-9.700 9.500l9.700 9.500v-4.600l-4.500-4.900l4.500-4.900z"/>
   <path d="M29.500 673.5l9.700 9.500l-9.700 9.500v-4.600l4.500-4.900l-4.500-4.900zM50.500 673.5l-9.700 9.500l9.700 9.500v-4.600l-4.500-4.900l4.500-4.900z"/>
  </g>
 </svg>
</div></div>

<svg class="abs" style="left:363px;top:172px" width="18" height="513" viewBox="363 172 18 513">
 <defs><linearGradient id="sbh2" x1="0" y1="0" x2="1" y2="0"><stop offset="0" stop-color="#fdfdfc"/><stop offset="1" stop-color="#e4e2df"/></linearGradient></defs>
 <rect x="365.500" y="173.500" width="12" height="507.500" rx="6" fill="#dedcd8" stroke="#b4b0aa"/>
 <path d="M369 181l2.500-2.800l2.500 2.800z" fill="#a09d98"/>
 <path d="M368 672.500l3.500 4l3.500-4z" fill="#4a4945"/>
 <rect x="365.500" y="185.500" width="12" height="358" rx="6" fill="url(#sbh2)" stroke="#a8a49e"/>
 <path d="M369.500 362.500h4M369.500 364.500h4M369.500 366.500h4" stroke="#9a9791" stroke-width="0.800"/>
 <path d="M365.500 669.500h12" stroke="#b4b0aa"/>
</svg>
<!-- splitter handle -->
<svg class="abs" style="left:381px;top:395px" width="6" height="12" viewBox="0 0 6 12"><path d="M1 2h4M1 5h4M1 8h4" stroke="#c4c1bc" stroke-width="1"/></svg>

  </div>

  <!-- 3D VIEW -->
  <div id="view" class="abs">
<svg class="abs" style="left:0;top:0" width="770" height="537" viewBox="386 116 770 537">
<path d="M437.30 118.75V653M492.95 118.75V653M548.60 118.75V653M604.25 118.75V653M659.90 118.75V653M715.55 118.75V653M771.20 118.75V653M826.85 118.75V653M882.50 118.75V653M938.15 118.75V653M993.80 118.75V653M1049.45 118.75V653M437 161.30H1105M437 217.01H1105M437 272.72H1105M437 328.43H1105M437 439.85H1105M437 495.56H1105M437 551.27H1105M437 606.98H1105" stroke="#d4d4d6" stroke-opacity="0.66" stroke-width="1.15" stroke-dasharray="4.1 3.847" fill="none"/>
<path d="M437 384.30H1105" stroke="#d4d4d6" stroke-opacity="0.66" stroke-width="1.15" stroke-dasharray="4.1 3.847" fill="none"/>
<path d="M467.5 384.4H1075" stroke="#dc645e" stroke-width="2" fill="none"/>
<path d="M771.2 116V653" stroke="#66cc66" stroke-width="2" fill="none"/>
<rect x="610" y="223.6" width="321.8" height="321.6" fill="none" stroke="#fff" stroke-width="3"/>
<circle cx="675.8" cy="278.8" r="20.6" fill="none" stroke="#fff" stroke-width="2.5"/>
<circle cx="866.5" cy="278.8" r="20.6" fill="none" stroke="#fff" stroke-width="2.5"/>
<circle cx="675.8" cy="489.2" r="20.6" fill="none" stroke="#fff" stroke-width="2.5"/>
<circle cx="866.5" cy="489.2" r="20.6" fill="none" stroke="#fff" stroke-width="2.5"/>
<g fill="#ff2600" stroke="#ff2600" stroke-width="1.6" stroke-linecap="round" stroke-linejoin="round">
<circle cx="610.5" cy="223.2" r="3.0" stroke="none"/>
<path d="M610.5 223.2L622.0 223.2" fill="none"/><path d="M618.6 226.1L622.6 223.2L618.6 220.3z" stroke-width="0.8"/>
<path d="M610.5 223.2L610.5 234.7" fill="none"/><path d="M607.6 231.3L610.5 235.3L613.4 231.3z" stroke-width="0.8"/>
<circle cx="932.3" cy="222.8" r="3.0" stroke="none"/>
<path d="M932.3 222.8L919.8 222.8" fill="none"/><path d="M923.2 219.9L919.2 222.8L923.2 225.7z" stroke-width="0.8"/>
<circle cx="610.5" cy="545.0" r="3.0" stroke="none"/>
<path d="M610.5 545.0L610.5 533.5" fill="none"/><path d="M613.4 536.9L610.5 532.9L607.6 536.9z" stroke-width="0.8"/>
<circle cx="932.2" cy="544.7" r="2.8" stroke="none"/>
<circle cx="675.8" cy="278.6" r="3.0" stroke="none"/>
<path d="M675.8 278.6L687.3 278.6" fill="none"/><path d="M683.9 281.5L687.9 278.6L683.9 275.7z" stroke-width="0.8"/>
<path d="M675.8 278.6L675.8 290.1" fill="none"/><path d="M672.9 286.7L675.8 290.7L678.7 286.7z" stroke-width="0.8"/>
<circle cx="867.0" cy="278.6" r="3.0" stroke="none"/>
<path d="M867.0 278.6L855.0 278.6" fill="none"/><path d="M858.4 275.7L854.4 278.6L858.4 281.5z" stroke-width="0.8"/>
<circle cx="675.8" cy="489.3" r="3.0" stroke="none"/>
<path d="M675.8 489.3L687.3 489.3" fill="none"/><path d="M683.9 492.2L687.9 489.3L683.9 486.4z" stroke-width="0.8"/>
<path d="M675.8 489.3L675.8 477.8" fill="none"/><path d="M678.7 481.2L675.8 477.2L672.9 481.2z" stroke-width="0.8"/>
<circle cx="866.5" cy="489.2" r="3.0" stroke="none"/>
<path d="M866.5 489.2L854.5 489.2" fill="none"/><path d="M857.9 486.3L853.9 489.2L857.9 492.1z" stroke-width="0.8"/>
<circle cx="771.2" cy="383.8" r="2.8" stroke="none"/>
<path d="M764.2 218.4L769.1 223.6L764.2 228.8M778.2 218.4L773.3 223.6L778.2 228.8" fill="none" stroke-width="2.5" stroke-linejoin="miter" stroke-linecap="butt"/>
<path d="M764.2 274.3L769.1 279.5L764.2 284.7M778.2 274.3L773.3 279.5L778.2 284.7" fill="none" stroke-width="2.5" stroke-linejoin="miter" stroke-linecap="butt"/>
<path d="M764.2 484.3L769.1 489.5L764.2 494.7M778.2 484.3L773.3 489.5L778.2 494.7" fill="none" stroke-width="2.5" stroke-linejoin="miter" stroke-linecap="butt"/>
<path d="M602.6 379.0L607.5 384.2L602.6 389.4M616.6 379.0L611.7 384.2L616.6 389.4" fill="none" stroke-width="2.5" stroke-linejoin="miter" stroke-linecap="butt"/>
<path d="M668.8 379.0L673.7 384.2L668.8 389.4M682.8 379.0L677.9 384.2L682.8 389.4" fill="none" stroke-width="2.5" stroke-linejoin="miter" stroke-linecap="butt"/>
<rect x="764.0" y="208.9" width="14.0" height="3.4" stroke="none"/>
<rect x="764.0" y="557.1" width="14.0" height="3.4" stroke="none"/>
<rect x="594.4" y="377.4" width="3.2" height="13.5" stroke="none"/>
<rect x="942.7" y="377.4" width="3.2" height="13.5" stroke="none"/>
<rect x="685.8" y="249.2" width="10" height="3.6" stroke="none"/>
<rect x="685.8" y="256.2" width="10" height="3.6" stroke="none"/>
<text transform="translate(699.3 263.2) rotate(0.05)" font-family="Liberation Sans,sans-serif" font-weight="bold" font-size="10" fill="#c81c00" stroke="none">12</text>
<text transform="translate(699.3 263.2) rotate(0.05)" font-family="Liberation Sans,sans-serif" font-weight="bold" font-size="10" fill="#c81c00" stroke="none">11</text>
<rect x="876.3" y="249.2" width="10" height="3.6" stroke="none"/>
<rect x="876.3" y="256.2" width="10" height="3.6" stroke="none"/>
<text transform="translate(889.8 263.2) rotate(0.05)" font-family="Liberation Sans,sans-serif" font-weight="bold" font-size="10" fill="#c81c00" stroke="none">12</text>
<text transform="translate(889.8 263.2) rotate(0.05)" font-family="Liberation Sans,sans-serif" font-weight="bold" font-size="10" fill="#c81c00" stroke="none">13</text>
<rect x="685.8" y="460.2" width="10" height="3.6" stroke="none"/>
<rect x="685.8" y="467.2" width="10" height="3.6" stroke="none"/>
<text transform="translate(699.3 474.2) rotate(0.05)" font-family="Liberation Sans,sans-serif" font-weight="bold" font-size="10" fill="#c81c00" stroke="none">11</text>
<rect x="876.3" y="460.2" width="10" height="3.6" stroke="none"/>
<rect x="876.3" y="467.2" width="10" height="3.6" stroke="none"/>
<text transform="translate(889.8 474.2) rotate(0.05)" font-family="Liberation Sans,sans-serif" font-weight="bold" font-size="10" fill="#c81c00" stroke="none">13</text>
</g>
<g>
<path d="M1129.4 625.5H1148" stroke="#a01818" stroke-width="1.6"/>
<path d="M1129.4 625.5V607" stroke="#0a8a0a" stroke-width="1.8"/>
<path d="M1143 625.5m-2.2 0l2.2-1.6l2.2 1.6l-2.2 1.6z" fill="#a01818"/>
<path d="M1129.4 612m-1.8 0l1.8-2.2l1.8 2.2l-1.8 2.2z" fill="#0a8a0a"/>
<path d="M1129.4 625.5m-2.4 0l2.4-2.4l2.4 2.4l-2.4 2.4z" fill="#1a1a9a"/>
<text x="1132" y="606.6" font-family="Liberation Sans,sans-serif" font-size="9" fill="#111">Y</text>
<text x="1132" y="625" font-family="Liberation Sans,sans-serif" font-size="9" fill="#111">Z</text>
<text x="1150" y="625" font-family="Liberation Sans,sans-serif" font-size="9" fill="#111">X</text>
</g>
</svg>
</div>

  <!-- BOTTOM TABS -->
  <div id="btabs" class="abs" style="left:0;top:0;width:0;height:0;">
<div class="abs" style="left:386px;top:652px;width:109px;height:29px;box-sizing:border-box;border:1px solid #b9b5af;border-top:none;border-radius:0 0 5px 5px;background:linear-gradient(#d8d5d1,#e9e7e4 45%,#efedeb);"></div>
<div class="abs" style="left:495px;top:652px;width:210px;height:33px;box-sizing:border-box;border:1px solid #b9b5af;border-top:none;border-radius:0 0 5px 5px;background:linear-gradient(#f3f2f1,#fbfbfa);"></div>
<div class="abs lbl" style="left:394.500px;top:659px;font-size:14.5px;letter-spacing:0.15px;">Start page</div>
<div class="abs lbl" style="left:526px;top:660px;font-size:14.5px;">T19-base-taladros : 1*</div>
<svg class="abs" style="left:386px;top:652px" width="330" height="33" viewBox="386 652 330 33">
 <path d="M473 664l9 9m0-9l-9 9" stroke="#5e5c58" stroke-width="3" fill="none"/>
 <path d="M682.500 664.800l9 9m0-9l-9 9" stroke="#5e5c58" stroke-width="3" fill="none"/>
 <path d="M503.300 661.500h5.700v2.600h-2.900v2.200h2.300v2.400h-2.300v4.600h-2.800z" fill="#e8301a"/>
 <g fill="#1430c8"><circle cx="512.500" cy="669.700" r="3.500"/>
 <path d="M512.500 664.600v10.200M507.400 669.700h10.200M508.900 666.100l7.200 7.200M516.100 666.100l-7.200 7.200" stroke="#1430c8" stroke-width="2.100"/></g>
 <circle cx="512.500" cy="669.700" r="1.600" fill="#f4f4f4"/>
</svg>

</div>

  <!-- RIGHT TOOLBAR -->
  <div id="rtb" class="abs" style="left:0;top:0;width:0;height:0;">
<svg class="abs" style="left:1157px;top:116px" width="40" height="569" viewBox="1157 116 40 569">
 <path d="M1172.500 120.300v3.700M1175.500 120.300v3.700M1178.500 120.300v3.700" stroke="#c9c6c2" stroke-width="1"/>
 <g fill="#9c9c9c" stroke="#8a8a8a" stroke-width="0.800" stroke-linejoin="round">
  <circle cx="1176" cy="144.500" r="4.700"/>
  <path d="M1187 171c-10.500-1.800-18.300 4-18.600 12.500c0 3 .4 5 1.200 7l3.800.4c-1-2.500-1.400-5-1-7.500c.6-5.500 6.500-9 13.800-8.200z"/>
  <circle cx="1171.700" cy="175.400" r="3.700"/>
  <rect x="1173.500" y="205.500" width="4.500" height="21.500" rx="0.800"/>
  <rect x="1165.400" y="250" width="22" height="4.600" rx="0.800"/>
  <path d="M1164.300 289.800l14.800-13.300l3 3.300l-14.800 13.300z"/>
  <path d="M1169.900 295.800l14.800-13.300l3 3.300l-14.800 13.300z"/>
  <path d="M1173.500 313.800h5v15.200h8.500v5h-21v-5h7.500z"/>
  <path d="M1171.800 346.800l16.500 16.200l-2.600 2.600l-16.500-16.200z"/>
  <path d="M1164.800 354.800c8.500-1 14.500 4 17.800 12.500l-3.400 1.800c-3-7-7.500-11-14-10.500z"/>
  <rect x="1168.400" y="387.300" width="15.200" height="5.700" rx="0.800"/>
  <rect x="1168.400" y="397.200" width="15.200" height="5.700" rx="0.800"/>
  <path d="M1166 422.600l8.900 8.900l-8.900 8.900v-5.300l4.200-3.600l-4.200-3.600zM1186.200 422.600l-8.900 8.900l8.900 8.900v-5.300l-4.200-3.600l4.200-3.600z"/>
  <path d="M1167.400 477h18.200v10.500h-18.200zM1170.400 477v-3c0-8.500 12.800-8.500 12.800 0v3h-3.600v-2.600c0-3.600-5.600-3.600-5.600 0v2.600z"/>
  <path d="M1166 507.400h3.600v4.100h14.500v-4.100h3.600v12.200h-3.600v-4.100h-14.500v4.100h-3.600z"/>
  <path d="M1170.400 538.500h12.200v3.600h-4.100v14.300h4.100v3.600h-12.200v-3.600h4.100v-14.300h-4.100z"/>
  <path d="M1186.900 574.800l-10 .8l2.600 2.800l-6.800 6.300l-2.600-2.800l-4.300 9.100l10-.8l-2.600-2.800l6.800-6.300l2.600 2.800z"/>
  <path d="M1176 609.100a11.200 11.200 0 1 0 .01 0zM1176 613a7.300 7.300 0 1 1 -.01 0z" fill-rule="evenodd"/>
  <path d="M1174.600 618.800l6.500-6.300l2.400 2.500l-6.500 6.300z"/>
  <path d="M1165.400 655.400l20.400-10.200v4.200l-5 2.500v7l5 2.500v4.400zM1177.200 653.600l-4.800 1.900l4.800 1.900z" fill-rule="evenodd"/>
 </g>
 <path d="M1164.300 454h23.700" stroke="#dcdad6" stroke-width="1"/>
</svg>

</div>
</div>
<div id="desk-right" class="abs"></div>
<div class="abs" style="left:1196px;top:10px;width:1px;height:675px;background:rgba(0,0,0,0.55);"></div>
<div id="topstrip" class="abs"></div>
<div id="below" class="abs"></div>
</body>
</html>
